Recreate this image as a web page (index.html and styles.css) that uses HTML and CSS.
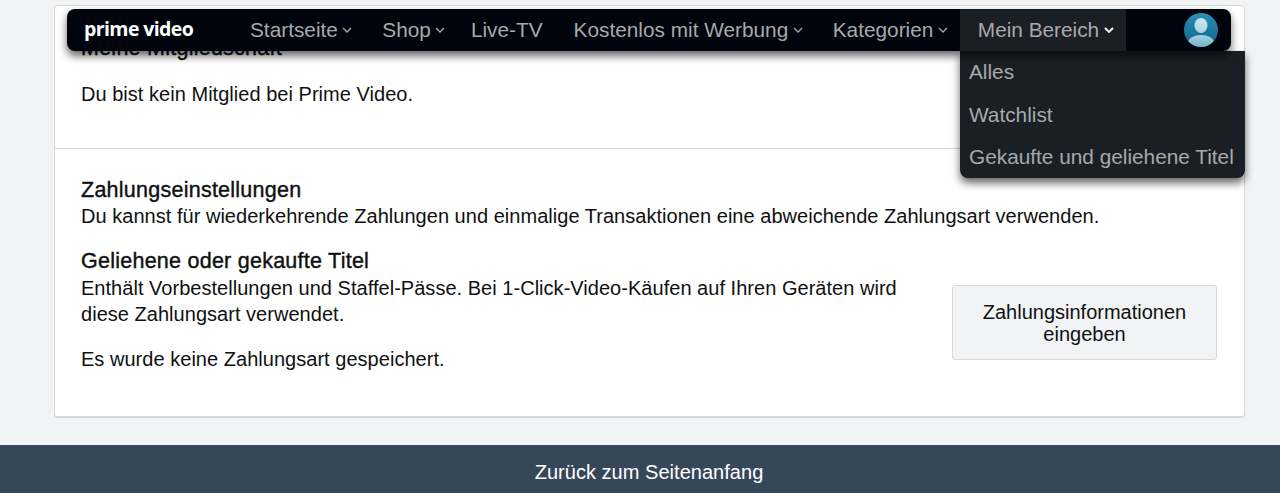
FILE: index.html
```html
<!DOCTYPE html>
<html lang="de">
<head>
    <meta charset="UTF-8">
    <title>Prime Video: Einstellungen</title>
    <link rel="stylesheet" href="styles.css">
</head>
<body>
    <nav class="navbar">
        <div class="logo">prime video</div>
        <ul class="nav-items">
            <li class="nav-item">Startseite<svg class="chevron" viewBox="0 0 10 6"><path d="M1 1l4 4 4-4"/></svg></li>
            <li class="nav-item shop">Shop<svg class="chevron" viewBox="0 0 10 6"><path d="M1 1l4 4 4-4"/></svg></li>
            <li class="nav-item">Live-TV</li>
            <li class="nav-item">Kostenlos mit Werbung<svg class="chevron" viewBox="0 0 10 6"><path d="M1 1l4 4 4-4"/></svg></li>
            <li class="nav-item">Kategorien<svg class="chevron" viewBox="0 0 10 6"><path d="M1 1l4 4 4-4"/></svg></li>
            <li class="nav-item active">Mein Bereich<svg class="chevron" viewBox="0 0 10 6"><path d="M1 1l4 4 4-4"/></svg></li>
        </ul>
        <svg class="avatar" viewBox="0 0 34 34">
            <defs>
                <linearGradient id="avatarBg" x1="0" y1="0" x2="0" y2="1">
                    <stop offset="0" stop-color="#2a8fb8"/>
                    <stop offset="1" stop-color="#0f6288"/>
                </linearGradient>
                <linearGradient id="avatarHead" x1="0" y1="0" x2="0" y2="1">
                    <stop offset="0" stop-color="#d3e9f0"/>
                    <stop offset="1" stop-color="#a9d2df"/>
                </linearGradient>
                <linearGradient id="avatarBody" x1="0" y1="0" x2="0" y2="1">
                    <stop offset="0" stop-color="#a8d2de"/>
                    <stop offset="1" stop-color="#5fa5bd"/>
                </linearGradient>
                <clipPath id="avatarClip"><circle cx="17" cy="17" r="17"/></clipPath>
            </defs>
            <circle cx="17" cy="17" r="17" fill="url(#avatarBg)"/>
            <g clip-path="url(#avatarClip)">
                <ellipse cx="17" cy="12.5" rx="6.5" ry="7.5" fill="url(#avatarHead)"/>
                <ellipse cx="17" cy="30" rx="13" ry="8" fill="url(#avatarBody)"/>
            </g>
        </svg>
    </nav>
    <ul class="dropdown">
        <li>Alles</li>
        <li>Watchlist</li>
        <li>Gekaufte und geliehene Titel</li>
    </ul>

    <main class="card">
        <section class="membership">
            <h3>Meine Mitgliedschaft</h3>
            <p>Du bist kein Mitglied bei Prime Video.</p>
        </section>
        <section class="payment">
            <div class="block">
                <h3>Zahlungseinstellungen</h3>
                <p>Du kannst für wiederkehrende Zahlungen und einmalige Transaktionen eine abweichende Zahlungsart verwenden.</p>
            </div>
            <div class="block-row">
                <div class="block-text">
                    <h3>Geliehene oder gekaufte Titel</h3>
                    <p>Enthält Vorbestellungen und Staffel-Pässe. Bei 1-Click-Video-Käufen auf Ihren Geräten wird diese Zahlungsart verwendet.</p>
                    <p class="note">Es wurde keine Zahlungsart gespeichert.</p>
                </div>
                <button class="pay-btn">Zahlungsinformationen eingeben</button>
            </div>
        </section>
    </main>

    <footer class="back-top">Zurück zum Seitenanfang</footer>
</body>
</html>
```

FILE: styles.css
```css
* {
    box-sizing: border-box;
}

body {
    margin: 0;
    height: 493px;
    overflow: hidden;
    background-color: #f2f3f5;
    color: #0f1111;
    font-family: 'Liberation Sans', Arial, sans-serif;
    font-size: 20px;
    line-height: 26px;
    letter-spacing: 0.03px;
}

h3 {
    margin: 0;
    font-size: 21.5px;
    font-weight: 400;
    letter-spacing: 0.25px;
    -webkit-text-stroke: 0.4px #0f1111;
}

p {
    margin: 0;
}

ul {
    list-style: none;
    margin: 0;
    padding: 0;
}

.navbar {
    position: absolute;
    top: 9px;
    left: 67px;
    width: 1164px;
    height: 42px;
    display: flex;
    align-items: stretch;
    padding-left: 17px;
    background: #00050d;
    border-radius: 8px;
    box-shadow: 0 5px 8px rgba(0, 0, 0, 0.6);
    z-index: 2;
}

.logo {
    width: 148px;
    line-height: 40px;
    color: white;
    font-family: 'Open Sans', sans-serif;
    font-size: 19.5px;
    font-weight: 700;
    letter-spacing: -0.6px;
}

.nav-items {
    display: flex;
}

.nav-item {
    display: flex;
    align-items: center;
    gap: 4.5px;
    padding: 0 13px 0 18px;
    color: #a7a9ab;
    font-size: 20.8px;
    letter-spacing: 0;
    white-space: nowrap;
}

.nav-item.shop {
    padding-right: 8.5px;
}

.nav-item.active {
    background: #1a1f26;
}

.chevron {
    width: 10px;
    height: 6px;
    margin-right: -1px;
    fill: none;
    stroke: #a7a9ab;
    stroke-width: 1.3;
}

.active .chevron {
    stroke: white;
    stroke-width: 1.8;
}

.avatar {
    width: 34px;
    height: 34px;
    margin: 4px 13px 0 auto;
}

.dropdown {
    position: absolute;
    top: 51px;
    left: 960px;
    width: 285px;
    height: 127px;
    padding: 0 9px;
    background: #1a1f26;
    border-radius: 0 0 8px 8px;
    box-shadow: 0 5px 8px rgba(0, 0, 0, 0.6);
    color: #a7a9ab;
    font-size: 20.8px;
    letter-spacing: 0;
    z-index: 1;
}

.dropdown li {
    height: 42.5px;
    line-height: 42px;
    white-space: nowrap;
}

.card {
    width: 1191px;
    height: 413px;
    margin: 5px 0 0 54px;
    background: white;
    border: 1px solid #d5d9d9;
    border-bottom-width: 2px;
    border-radius: 4px;
}

.membership {
    height: 143px;
    padding: 29px 26px 0;
    border-bottom: 1px solid #d5d9d9;
}

.membership p {
    margin-top: 20px;
}

.payment {
    padding: 28px 27px 0 26px;
}

.block-row {
    display: flex;
    align-items: flex-start;
    justify-content: space-between;
    margin-top: 19px;
}

.block-text {
    width: 825px;
}

.block-text h3 {
    margin-bottom: 1px;
}

.note {
    margin-top: 19px;
}

.pay-btn {
    width: 265px;
    height: 75px;
    margin: 37px 0 0 0;
    padding: 0 20px;
    background: #f2f3f5;
    border: 1px solid #d5d9d9;
    border-radius: 3px;
    color: #0f1111;
    font-family: 'Liberation Sans', Arial, sans-serif;
    font-size: 20px;
    line-height: 22px;
}

.back-top {
    height: 48px;
    margin-top: 27px;
    padding-left: 18px;
    background: #37475a;
    color: white;
    text-align: center;
    line-height: 54px;
}
```
